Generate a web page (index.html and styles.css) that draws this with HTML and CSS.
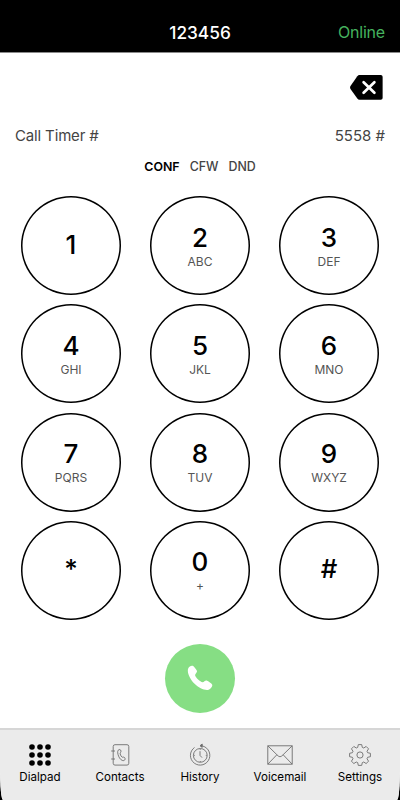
FILE: index.html
```html
<!DOCTYPE html>
<html lang="en">
<head>
    <meta charset="UTF-8">
    <meta name="viewport" content="width=device-width, initial-scale=1.0">
    <title>Dialpad</title>
    <link rel="stylesheet" href="styles.css">
</head>
<body>
    <div class="phone">
        <header class="header">
            <h1>123456</h1>
            <span class="status">Online</span>
        </header>

        <main class="content">
            <div class="number-row">
                <button class="delete" aria-label="Delete">
                    <svg width="33" height="25" viewBox="0 0 33 25">
                        <path d="M9.5 0H30.8Q32.6 0 32.6 1.8V23Q32.6 24.8 30.8 24.8H9.5Q8.2 24.8 7.3 23.6L.5 14Q-.4 12.5.5 11L7.3 1.2Q8.2 0 9.5 0Z" fill="#000"/>
                        <path d="M13.6 7.2L24.4 17.8M24.4 7.2L13.6 17.8" stroke="#fff" stroke-width="2.7" stroke-linecap="round"/>
                    </svg>
                </button>
            </div>

            <div class="info">
                <span class="timer">Call Timer #</span>
                <span>5558 #</span>
            </div>

            <div class="modes">
                <span class="active">CONF</span>
                <span>CFW</span>
                <span>DND</span>
            </div>

            <div class="keypad">
                <button class="key single"><b>1</b></button>
                <button class="key"><b>2</b><small>ABC</small></button>
                <button class="key"><b>3</b><small>DEF</small></button>
                <button class="key"><b>4</b><small>GHI</small></button>
                <button class="key"><b>5</b><small>JKL</small></button>
                <button class="key"><b>6</b><small>MNO</small></button>
                <button class="key"><b>7</b><small>PQRS</small></button>
                <button class="key"><b>8</b><small>TUV</small></button>
                <button class="key"><b>9</b><small>WXYZ</small></button>
                <button class="key single"><b>*</b></button>
                <button class="key"><b>0</b><small>+</small></button>
                <button class="key single"><b>#</b></button>
            </div>

            <button class="call" aria-label="Call">
                <svg width="26" height="26" viewBox="0 0 26 26">
                    <path d="M1.2 3.4C2.2 1.4 4.6.2 6.2 1.1C7.5 2.1 9 4.2 9.9 5.8C10.6 7.2 8 8.7 8.1 10.3C8.6 12.8 13.2 17 15.6 17.2C17.2 17.2 18 15.2 19.6 15.6C21.6 16.5 24.6 18.4 25.2 19.7C25.8 21.4 23.8 24.1 21.6 24.8C17.8 25.8 11.6 22.8 7.6 18.8C3.4 14.6-.4 7.8 1.2 3.4Z" fill="#fff"/>
                </svg>
            </button>
        </main>

        <nav class="tabs">
            <a class="tab">
                <svg width="24" height="24" viewBox="0 0 24 24">
                    <g fill="#000">
                        <circle cx="4" cy="4" r="2.8"/><circle cx="12" cy="4" r="2.8"/><circle cx="20" cy="4" r="2.8"/>
                        <circle cx="4" cy="12" r="2.8"/><circle cx="12" cy="12" r="2.8"/><circle cx="20" cy="12" r="2.8"/>
                        <circle cx="4" cy="20" r="2.8"/><circle cx="12" cy="20" r="2.8"/><circle cx="20" cy="20" r="2.8"/>
                    </g>
                </svg>
                Dialpad
            </a>
            <a class="tab">
                <svg class="line" width="24" height="24" viewBox="0 0 24 24">
                    <rect x="5.2" y="1.7" width="15.6" height="20.4" rx="1.8"/>
                    <path d="M3.2 8H7M3.2 16H7"/>
                    <path d="M10.2 7.2C11.2 6 12.8 6.4 13 8C13.2 9.4 11.8 9.8 12.2 11C12.6 12.4 13.2 13.6 14.2 14.2C15 14.4 15.6 13.6 16.6 14.6C17.6 15.8 17 17.2 15.8 17.6C13.6 18 11.6 15.6 10.6 13.2C9.8 11 9.2 8.6 10.2 7.2Z"/>
                </svg>
                Contacts
            </a>
            <a class="tab">
                <svg class="line" width="24" height="24" viewBox="0 0 24 24">
                    <path d="M12.5 2.7A9.7 9.7 0 1 1 6.5 4.5"/>
                    <path d="M14.2 1L12 2.7L14.2 4.4Z" fill="#6e6e6e"/>
                    <circle cx="12.3" cy="12.4" r="6.9"/>
                    <path d="M12 8.2V12.4L14 14.6M12.3 5.8V6.8M12.3 18V19M5.8 12.4H6.8M17.8 12.4H18.8"/>
                </svg>
                History
            </a>
            <a class="tab">
                <svg class="line" width="26" height="24" viewBox="0 0 26 24">
                    <rect x=".8" y="2.8" width="24.4" height="18.4"/>
                    <path d="M1 3L11.2 13Q13 14.6 14.8 13L25 3M1 21L9.8 11.8M25 21L16.2 11.8"/>
                </svg>
                Voicemail
            </a>
            <a class="tab">
                <svg class="line" width="24" height="24" viewBox="-12 -12 24 24">
                    <path d="M-2.3-7.6L-1.7-10.4H1.7L2.3-7.6L3.75-7L6.15-8.56L8.56-6.15L7-3.75L7.6-2.3L10.4-1.7V1.7L7.6 2.3L7 3.75L8.56 6.15L6.15 8.56L3.75 7L2.3 7.6L1.7 10.4H-1.7L-2.3 7.6L-3.75 7L-6.15 8.56L-8.56 6.15L-7 3.75L-7.6 2.3L-10.4 1.7V-1.7L-7.6-2.3L-7-3.75L-8.56-6.15L-6.15-8.56L-3.75-7Z"/>
                    <circle r="3.1"/>
                </svg>
                Settings
            </a>
        </nav>
    </div>
</body>
</html>
```

FILE: styles.css
```css
* {
    box-sizing: border-box;
}
body {
    margin: 0;
    background: #000;
    font-family: Inter, "Liberation Sans", sans-serif;
    overflow: hidden;
}
button {
    padding: 0;
    border: none;
    background: none;
    font-family: inherit;
    color: #000;
}
.phone {
    display: flex;
    flex-direction: column;
    width: 400px;
    height: 800px;
    background: #fff;
    border-radius: 0 0 3px 3px / 0 0 32px 32px;
    overflow: hidden;
}
.header {
    display: grid;
    grid-template-columns: 1fr auto 1fr;
    align-items: center;
    height: 53px;
    padding: 12px 15px 0;
    background: #000;
    border-bottom: 1px solid #8a8a8a;
}
.header h1 {
    grid-column: 2;
    margin: 0;
    color: #fff;
    font-size: 17.3px;
    font-weight: 500;
}
.status {
    justify-self: end;
    color: #45b25e;
    font-size: 16px;
    letter-spacing: -0.2px;
}
.content {
    flex: 1;
    display: flex;
    flex-direction: column;
    align-items: center;
}
.number-row {
    display: flex;
    justify-content: flex-end;
    align-items: center;
    width: 100%;
    height: 70px;
    padding-right: 17px;
    padding-bottom: 1px;
}
.delete,
.number-row svg {
    display: block;
}
.info {
    display: flex;
    justify-content: space-between;
    width: 100%;
    padding: 3px 15px 0;
    font-size: 15px;
    line-height: 20px;
    color: #444;
}
.timer {
    letter-spacing: -0.15px;
}
.modes {
    display: flex;
    gap: 10px;
    margin-top: 12px;
    font-size: 12.4px;
    font-weight: 500;
    line-height: 18px;
    color: #444;
}
.modes .active {
    color: #000;
    font-weight: 600;
}
/* keys are slightly wider than tall */
.keypad {
    display: grid;
    grid-template-columns: repeat(3, 100px);
    grid-auto-rows: 99px;
    column-gap: 29px;
    row-gap: 9.3px;
    margin-top: 20px;
}
.key {
    display: flex;
    flex-direction: column;
    justify-content: center;
    align-items: center;
    border-radius: 50%;
    box-shadow: inset 0 0 0 1.5px #000;
}
.key b {
    font-size: 26px;
    font-weight: 500;
    line-height: 32px;
}
.key small {
    font-size: 12px;
    line-height: 16px;
    color: #555;
}
.single {
    padding-bottom: 2px;
}
.call {
    display: flex;
    justify-content: center;
    align-items: center;
    width: 70px;
    height: 69px;
    margin-top: 24px;
    border-radius: 50%;
    background: #86de84;
}
.tabs {
    display: grid;
    grid-template-columns: repeat(5, 1fr);
    height: 72px;
    padding-top: 13px;
    background: #ebebeb;
    border-top: 2px solid #d6d6d6;
}
.tab {
    display: flex;
    flex-direction: column;
    align-items: center;
    gap: 2px;
    font-size: 11.6px;
    line-height: 16px;
    color: #000;
}
.line {
    fill: none;
    stroke: #6e6e6e;
    stroke-width: 0.9;
}
```
